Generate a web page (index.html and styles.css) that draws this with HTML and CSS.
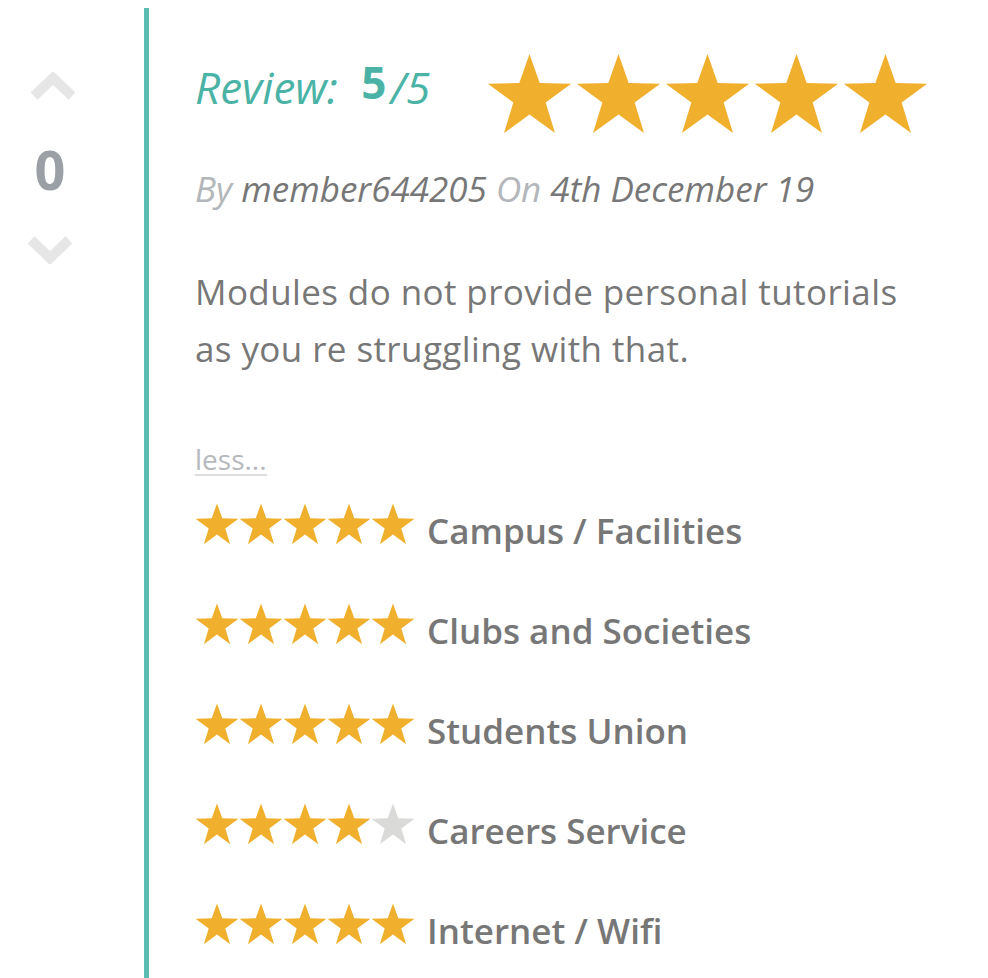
FILE: index.html
```html
<!DOCTYPE html>
<html>
<head>
<meta charset="utf-8">
<link rel="stylesheet" href="styles.css">
</head>
<body>
<svg class="defs" width="0" height="0">
  <defs>
    <symbol id="star" viewBox="0 0 100 96">
      <path d="M50 1 L62 35 L99 36 L69 58 L80 94 L50 72 L20 94 L31 58 L1 36 L38 35 Z"/>
    </symbol>
  </defs>
</svg>
<div class="review">
  <div class="vote">
    <svg class="chev up" viewBox="0 0 44 30"><path d="M3 24 L22 6 L41 24"/></svg>
    <div class="count">0</div>
    <svg class="chev down" viewBox="0 0 44 30"><path d="M3 6 L22 24 L41 6"/></svg>
  </div>
  <div class="content">
    <div class="head">
      <div class="score">Review: <b>5</b><span class="of">/5</span></div>
      <div class="bigstars">
        <svg><use href="#star"/></svg><svg><use href="#star"/></svg><svg><use href="#star"/></svg><svg><use href="#star"/></svg><svg><use href="#star"/></svg>
      </div>
    </div>
    <div class="byline"><span class="muted">By</span> member644205 <span class="muted">On</span> 4th December 19</div>
    <p class="body">Modules do not provide personal tutorials as you re struggling with that.</p>
    <a class="less">less...</a>
    <ul class="ratings">
      <li><span class="stars"><svg><use href="#star"/></svg><svg><use href="#star"/></svg><svg><use href="#star"/></svg><svg><use href="#star"/></svg><svg><use href="#star"/></svg></span>Campus / Facilities</li>
      <li><span class="stars"><svg><use href="#star"/></svg><svg><use href="#star"/></svg><svg><use href="#star"/></svg><svg><use href="#star"/></svg><svg><use href="#star"/></svg></span>Clubs and Societies</li>
      <li><span class="stars"><svg><use href="#star"/></svg><svg><use href="#star"/></svg><svg><use href="#star"/></svg><svg><use href="#star"/></svg><svg><use href="#star"/></svg></span>Students Union</li>
      <li><span class="stars"><svg><use href="#star"/></svg><svg><use href="#star"/></svg><svg><use href="#star"/></svg><svg><use href="#star"/></svg><svg class="off"><use href="#star"/></svg></span>Careers Service</li>
      <li><span class="stars"><svg><use href="#star"/></svg><svg><use href="#star"/></svg><svg><use href="#star"/></svg><svg><use href="#star"/></svg><svg><use href="#star"/></svg></span>Internet / Wifi</li>
    </ul>
  </div>
</div>
</body>
</html>
```
FILE: styles.css
```css
html, body {
  margin: 0;
  padding: 0;
  background: #fff;
}
body {
  font-family: "Open Sans", Lato, sans-serif;
  color: #777;
  overflow: hidden;
}
.defs {
  position: absolute;
  width: 0;
  height: 0;
}
.review {
  display: flex;
  padding-top: 8px;
}
.vote {
  width: 100px;
  display: flex;
  flex-direction: column;
  align-items: center;
  padding-top: 64px;
}
.chev {
  width: 44px;
  height: 30px;
  fill: none;
  stroke: #e6e6e6;
  stroke-width: 10;
}
.chev.up {
  margin-left: 6px;
}
.count {
  font-size: 54px;
  font-weight: 700;
  color: #9aa0a6;
  line-height: 1;
  margin-top: 40px;
  margin-bottom: 38px;
}
.content {
  margin-left: 44px;
  border-left: 5px solid #5bbdb2;
  padding-left: 46px;
  min-height: 1000px;
  flex: 1;
}
.head {
  display: flex;
  align-items: center;
  height: 100px;
  margin-top: 36px;
}
.score {
  font-style: italic;
  font-size: 44px;
  color: #4ab3a6;
  width: 292px;
  white-space: nowrap;
  margin-top: -14px;
}
.score b {
  font-style: normal;
  font-weight: 700;
  font-size: 44px;
  position: relative;
  top: -5px;
  margin-left: 12px;
}
.score .of {
  margin-left: 4px;
}
.bigstars {
  display: flex;
  gap: 4px;
}
.bigstars svg {
  width: 85px;
  height: 82px;
  fill: #f0b02e;
}
.byline {
  font-style: italic;
  font-size: 35px;
  margin-top: 21px;
  color: #777;
}
.muted {
  color: #b3b6ba;
}
.body {
  font-size: 35px;
  line-height: 57px;
  letter-spacing: 0.4px;
  margin: 51px 0 0 0;
  max-width: 730px;
}
.less {
  display: inline-block;
  font-size: 28px;
  color: #b5b8bc;
  border-bottom: 2px solid #ddd;
  line-height: 30px;
  margin-top: 67px;
}
.ratings {
  list-style: none;
  margin: 4px 0 0 0;
  padding: 0;
}
.ratings li {
  display: flex;
  align-items: center;
  height: 100px;
  font-size: 35px;
  font-weight: 600;
  color: #777;
}
.stars {
  display: flex;
  margin-right: 12px;
  margin-top: -12px;
}
.stars svg {
  width: 44px;
  height: 42px;
  fill: #f0b02e;
}
.stars svg.off {
  fill: #dadad8;
}
```
